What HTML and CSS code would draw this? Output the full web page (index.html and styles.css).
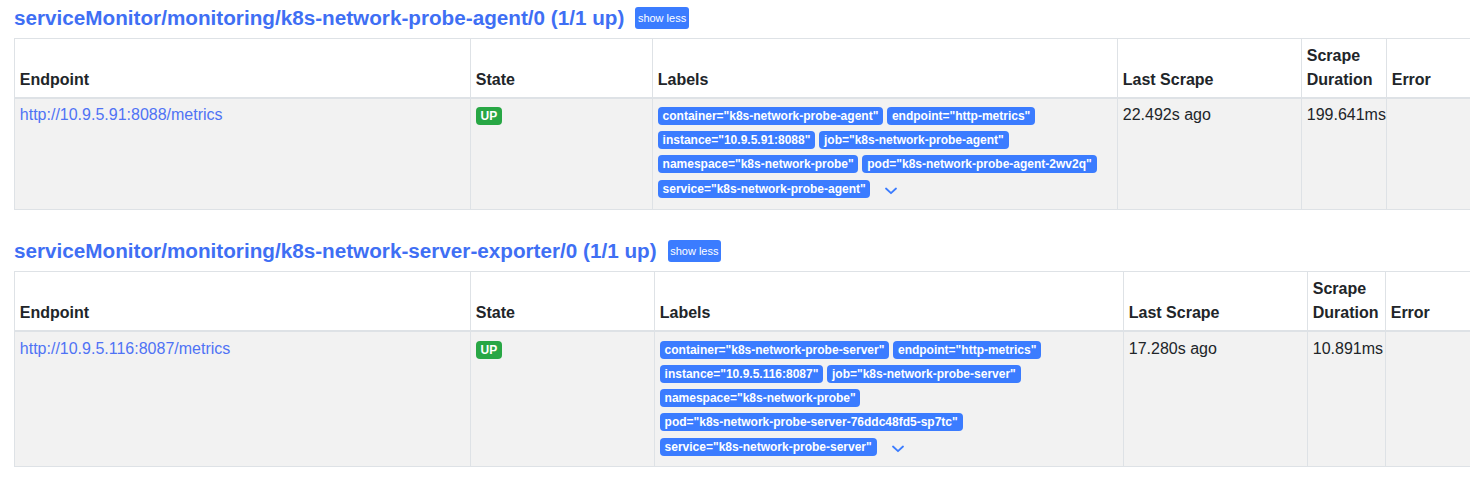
FILE: index.html
```html
<!DOCTYPE html>
<html>
<head>
<meta charset="utf-8">
<title>Targets</title>
<link rel="stylesheet" href="styles.css">
</head>
<body>
<div class="page">
  <section class="pool">
    <div class="pool-head">
      <a class="pool-title" href="#">serviceMonitor/monitoring/k8s-network-probe-agent/0 (1/1 up)</a>
      <button class="btn-xs">show less</button>
    </div>
    <table class="targets t1">
      <thead>
        <tr>
          <th class="c1">Endpoint</th>
          <th class="c2">State</th>
          <th class="c3">Labels</th>
          <th class="c4">Last Scrape</th>
          <th class="c5">Scrape Duration</th>
          <th class="c6">Error</th>
        </tr>
      </thead>
      <tbody>
        <tr>
          <td><a class="endpoint" href="#">http://10.9.5.91:8088/metrics</a></td>
          <td><span class="badge badge-up">UP</span></td>
          <td class="labels"><span class="badge">container="k8s-network-probe-agent"</span><span class="badge">endpoint="http-metrics"</span><span class="badge">instance="10.9.5.91:8088"</span><span class="badge">job="k8s-network-probe-agent"</span><span class="badge">namespace="k8s-network-probe"</span><span class="badge">pod="k8s-network-probe-agent-2wv2q"</span><span class="badge">service="k8s-network-probe-agent"</span><button class="btn-more" title="show more"><svg class="chev" viewBox="0 0 12 8" width="12" height="8"><polyline points="1,1.5 6,6.2 11,1.5" fill="none" stroke="currentColor" stroke-width="1.8" stroke-linecap="round" stroke-linejoin="round"/></svg></button></td>
          <td>22.492s ago</td>
          <td>199.641ms</td>
          <td></td>
        </tr>
      </tbody>
    </table>
  </section>

  <section class="pool">
    <div class="pool-head">
      <a class="pool-title" href="#">serviceMonitor/monitoring/k8s-network-server-exporter/0 (1/1 up)</a>
      <button class="btn-xs">show less</button>
    </div>
    <table class="targets t2">
      <thead>
        <tr>
          <th class="c1">Endpoint</th>
          <th class="c2">State</th>
          <th class="c3">Labels</th>
          <th class="c4">Last Scrape</th>
          <th class="c5">Scrape Duration</th>
          <th class="c6">Error</th>
        </tr>
      </thead>
      <tbody>
        <tr>
          <td><a class="endpoint" href="#">http://10.9.5.116:8087/metrics</a></td>
          <td><span class="badge badge-up">UP</span></td>
          <td class="labels"><span class="badge">container="k8s-network-probe-server"</span><span class="badge">endpoint="http-metrics"</span><span class="badge">instance="10.9.5.116:8087"</span><span class="badge">job="k8s-network-probe-server"</span><span class="badge">namespace="k8s-network-probe"</span><span class="badge">pod="k8s-network-probe-server-76ddc48fd5-sp7tc"</span><span class="badge">service="k8s-network-probe-server"</span><button class="btn-more" title="show more"><svg class="chev" viewBox="0 0 12 8" width="12" height="8"><polyline points="1,1.5 6,6.2 11,1.5" fill="none" stroke="currentColor" stroke-width="1.8" stroke-linecap="round" stroke-linejoin="round"/></svg></button></td>
          <td>17.280s ago</td>
          <td>10.891ms</td>
          <td></td>
        </tr>
      </tbody>
    </table>
  </section>
</div>
</body>
</html>
```

FILE: styles.css
```css
html, body {
  margin: 0;
  padding: 0;
  background: #ffffff;
}

body {
  font-family: "Liberation Sans", Arial, sans-serif;
  font-size: 16px;
  line-height: 1.5;
  color: #212529;
}

.page {
  padding-left: 14px;
  overflow: hidden;
  width: 1456px;
}

.pool {
  padding-top: 7px;
}

.pool + .pool {
  margin-top: 23px;
}

.pool-head {
  display: flex;
  align-items: center;
  height: 22px;
  margin: 0 0 9px;
}

.pool-title {
  font-size: 20.7px;
  font-weight: 700;
  line-height: 1.2;
  color: #3f6ff4;
  text-decoration: none;
}

.btn-xs {
  margin-left: 11px;
  height: 22px;
  padding: 0 2.5px;
  border: 0;
  border-radius: 3px;
  background: #3b7cff;
  color: #ffffff;
  font-family: "Liberation Sans", Arial, sans-serif;
  font-size: 11px;
  line-height: 22px;
  cursor: pointer;
}

.targets {
  border-collapse: collapse;
  table-layout: fixed;
  width: 1560px;
}

.targets th,
.targets td {
  border: 1px solid #dee2e6;
  padding: 4.8px;
  text-align: left;
}

.targets th {
  vertical-align: bottom;
  border-bottom: 2px solid #dee2e6;
  font-weight: 700;
  background: #ffffff;
}

.targets td {
  vertical-align: top;
  background: #f2f2f2;
}

.t1 .c1 { width: 445.4px; }
.t1 .c2 { width: 171.4px; }
.t1 .c3 { width: 454.4px; }
.t1 .c4 { width: 173.4px; }
.t1 .c5 { width: 74.4px; }

.t2 .c1 { width: 445.4px; }
.t2 .c2 { width: 173.4px; }
.t2 .c3 { width: 458.4px; }
.t2 .c4 { width: 173.4px; }
.t2 .c5 { width: 67.4px; }

.endpoint {
  color: #4f72f5;
  text-decoration: none;
}

.badge {
  display: inline-block;
  padding: 3px 4.8px;
  margin-right: 4px;
  font-size: 12px;
  font-weight: 700;
  line-height: 1;
  white-space: nowrap;
  vertical-align: baseline;
  border-radius: 4px;
  color: #ffffff;
  background: #3b7cff;
}

.badge-up {
  background: #28a745;
}

.btn-more {
  display: inline-block;
  padding: 2px 8px 4px;
  margin-left: 2px;
  border: 1px solid transparent;
  background: transparent;
  color: #3b7cff;
  font-size: 14px;
  line-height: 21px;
  vertical-align: baseline;
  cursor: pointer;
}

.chev {
  display: inline-block;
  vertical-align: -2px;
}
```
